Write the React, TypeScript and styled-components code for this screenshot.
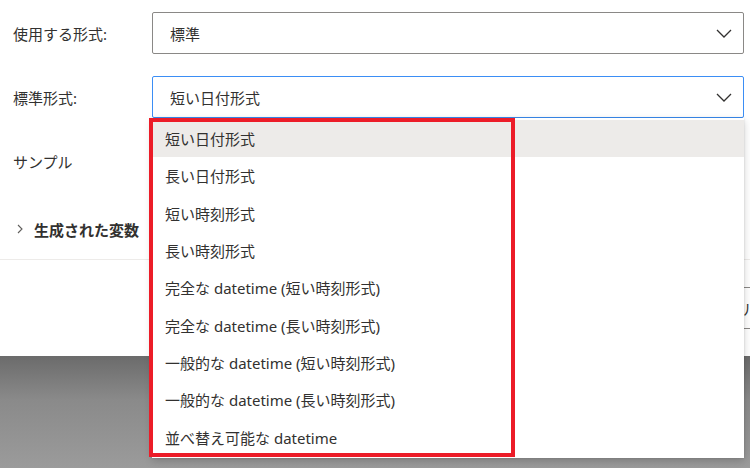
import React from 'react';
import styled, { createGlobalStyle } from 'styled-components';

const GlobalStyle = createGlobalStyle`
  html, body {
    margin: 0;
    padding: 0;
    overflow: hidden;
  }
  body {
    font-family: 'Noto Sans', 'Noto Sans CJK JP', sans-serif;
    color: #323130;
  }
  * {
    box-sizing: border-box;
  }
`;

const formats = [
  '短い日付形式',
  '長い日付形式',
  '短い時刻形式',
  '長い時刻形式',
  '完全な datetime (短い時刻形式)',
  '完全な datetime (長い時刻形式)',
  '一般的な datetime (短い時刻形式)',
  '一般的な datetime (長い時刻形式)',
  '並べ替え可能な datetime',
];

function Chevron() {
  return (
    <svg width='16' height='9' viewBox='0 0 16 9' fill='none'>
      <polyline points='1,1 8,8 15,1' stroke='#323130' strokeWidth='1.3' />
    </svg>
  );
}

function App() {
  return (
    <Page>
      <GlobalStyle />
      <Dialog>
        <Form>
          <Label>使用する形式:</Label>
          <Select>
            <span>標準</span>
            <Chevron />
          </Select>
          <Label>標準形式:</Label>
          <Select $focused>
            <span>短い日付形式</span>
            <Chevron />
          </Select>
          <Label>サンプル</Label>
          <div />
        </Form>
        <Expander>
          <svg width='6' height='10' viewBox='0 0 6 10' fill='none'>
            <polyline points='1,1 5,5 1,9' stroke='#605e5c' strokeWidth='1.1' />
          </svg>
          <span>生成された変数</span>
        </Expander>
        <Footer>
          <FooterButton>キャンセル</FooterButton>
        </Footer>
      </Dialog>
      <Menu>
        {formats.map((f, i) => (
          <MenuItem key={f} $selected={i === 0}>
            {f}
          </MenuItem>
        ))}
      </Menu>
      <Highlight />
    </Page>
  );
}

export default App;

const Page = styled.div`
  position: relative;
  width: 750px;
  height: 468px;
  overflow: hidden;
  background: linear-gradient(180deg, #6b6b6b 356px, #8a8a8a 400px, #9b9b9b 468px);
`;

const Dialog = styled.div`
  background: #ffffff;
  height: 356px;
  display: flex;
  flex-direction: column;
`;

const Form = styled.div`
  display: grid;
  grid-template-columns: 139px 592px;
  grid-auto-rows: 42px;
  row-gap: 22px;
  padding: 12px 0 0 13px;
`;

const Label = styled.div`
  display: flex;
  align-items: center;
  font-size: 15px;
  color: #323130;
`;

const Select = styled.div<{ $focused?: boolean }>`
  display: flex;
  align-items: center;
  justify-content: space-between;
  padding: 0 11px 0 17px;
  border: 1px solid ${({ $focused }) => ($focused ? '#3b8ef5' : '#8a8886')};
  border-radius: 2px;
  font-size: 15px;
  background: #ffffff;
`;

const Expander = styled.div`
  display: flex;
  align-items: center;
  gap: 11px;
  height: 42px;
  margin-top: 26px;
  padding-left: 17px;
  font-size: 15px;
  font-weight: 700;
  color: #323130;
  border-bottom: 1px solid #edebe9;
  box-sizing: content-box;
  padding-bottom: 9px;
`;

const Footer = styled.div`
  display: flex;
  justify-content: flex-end;
  padding-top: 27px;
  margin-right: -33px;
`;

const FooterButton = styled.div`
  height: 42px;
  padding: 0 24px;
  display: flex;
  align-items: center;
  border: 1px solid #8a8886;
  border-radius: 2px;
  font-size: 15px;
  color: #323130;
`;

const Menu = styled.div`
  position: absolute;
  left: 152px;
  top: 118px;
  width: 592px;
  padding: 2px 0 2px;
  background: #ffffff;
  box-shadow: 0 3px 8px rgba(0, 0, 0, 0.18), 0 0 2px rgba(0, 0, 0, 0.12);
`;

const MenuItem = styled.div<{ $selected?: boolean }>`
  height: 37.3px;
  display: flex;
  align-items: center;
  padding-left: 13px;
  font-size: 15px;
  color: #323130;
  background: ${({ $selected }) => ($selected ? '#edebe9' : 'transparent')};
`;

const Highlight = styled.div`
  position: absolute;
  left: 149px;
  top: 118px;
  width: 366px;
  height: 339px;
  border: 4px solid #ec1c28;
`;
